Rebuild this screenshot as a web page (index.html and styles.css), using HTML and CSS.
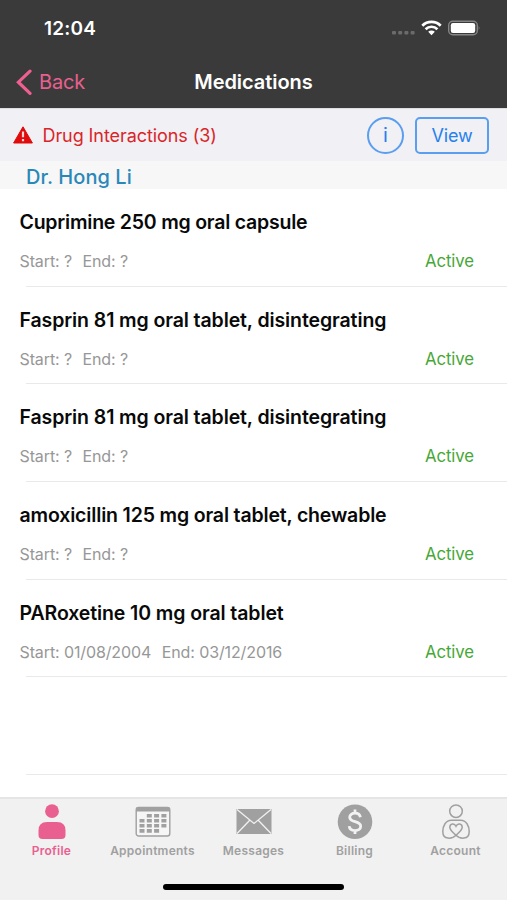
FILE: index.html
```html
<!DOCTYPE html>
<html lang="en">
<head>
<meta charset="utf-8">
<title>Medications</title>
<link rel="stylesheet" href="styles.css">
</head>
<body>
<div class="app">
  <header class="header">
    <div class="status">
      <span class="time">12:04</span>
      <svg class="status-icons" width="90" height="20" viewBox="0 0 90 20">
        <g fill="#6b6b6b"><rect x="1" y="12" width="4" height="3.6" rx="1"/><rect x="7.200" y="12" width="4" height="3.6" rx="1"/><rect x="13.400" y="12" width="4" height="3.6" rx="1"/><rect x="19.600" y="12" width="4" height="3.6" rx="1"/></g>
        <g transform="translate(-1 0)"><g fill="none" stroke="#fff" stroke-width="2.7"><path d="M32.3 6.700a13 13 0 0 1 18.400 0"/><path d="M35.600 10.200a8.300 8.300 0 0 1 11.800 0"/></g>
        <path d="M38.200 12.800a4.700 4.700 0 0 1 6.600 0L41.500 16.200z" fill="#fff"/></g>
        <rect x="57.700" y="2.200" width="28.600" height="13.600" rx="4" fill="none" stroke="#858585" stroke-width="1.400"/>
        <rect x="59.800" y="4" width="24.400" height="10" rx="2.200" fill="#fff"/>
        <path d="M87.700 6.700q1.600 2.300 0 4.600z" fill="#858585"/>
      </svg>
    </div>
    <nav class="navbar">
      <a class="back"><svg width="17" height="27" viewBox="0 0 17 27"><path d="M15 2.200 3.400 13.200 15 24.400" fill="none" stroke="#f05f92" stroke-width="3.200" stroke-linecap="round" stroke-linejoin="miter"/></svg><span>Back</span></a>
      <h1 class="heading">Medications</h1>
    </nav>
  </header>
  <section class="alert">
    <svg class="warning" width="20" height="18" viewBox="0 0 20 18"><path d="M10 .8 19.400 17H.6z" fill="#e10b0b" stroke="#e10b0b" stroke-linejoin="round"/><path d="M10 5.500v5.800M10 13v2.200" stroke="#f4d6da" stroke-width="2.200"/></svg>
    <span class="alert-text">Drug Interactions (3)</span>
    <button class="info">i</button>
    <button class="view">View</button>
  </section>
  <h2 class="doctor"><span>Dr. Hong Li</span></h2>
  <main class="list">
    <article class="med"><h3><span class="capsule">Cuprimine 250 mg oral capsule</span></h3><div class="details"><span class="start">Start: ?</span><span>End: ?</span><span class="active">Active</span></div></article>
    <article class="med"><h3><span>Fasprin 81 mg oral tablet, disintegrating</span></h3><div class="details"><span class="start">Start: ?</span><span>End: ?</span><span class="active">Active</span></div></article>
    <article class="med"><h3><span>Fasprin 81 mg oral tablet, disintegrating</span></h3><div class="details"><span class="start">Start: ?</span><span>End: ?</span><span class="active">Active</span></div></article>
    <article class="med"><h3><span class="chewable">amoxicillin 125 mg oral tablet, chewable</span></h3><div class="details"><span class="start">Start: ?</span><span>End: ?</span><span class="active">Active</span></div></article>
    <article class="med"><h3><span>PARoxetine 10 mg oral tablet</span></h3><div class="details"><span class="start">Start: 01/08/2004</span><span>End: 03/12/2016</span><span class="active">Active</span></div></article>
    <article class="med"></article>
  </main>
  <footer class="footer">
    <nav class="tabs">
      <a class="tab selected"><svg width="36" height="36" viewBox="0 0 36 36" fill="currentColor"><circle cx="18" cy="7.200" r="6.900"/><path d="M13 18h10q8.500 0 8.500 8.500V31q0 4-4 4H8.500q-4 0-4-4v-4.500Q4.500 18 13 18z"/></svg><span>Profile</span></a>
      <a class="tab"><svg width="36" height="36" viewBox="0 0 36 36"><rect x="1.200" y="3.500" width="33.600" height="28.500" rx="2.500" fill="#f6f6f6" stroke="currentColor" stroke-width="1.400"/><path d="M1 7.500V5q0-2 2-2h30q2 0 2 2v2.500z" fill="currentColor"/><g stroke="currentColor" stroke-width="3.600" stroke-dasharray="5 2.300"><path d="M11.800 11.700h20M4.500 16.700h27.300M4.500 21.700h27.300M4.500 26.900h20"/></g></svg><span>Appointments</span></a>
      <a class="tab"><svg width="36" height="36" viewBox="0 0 36 36"><path d="M.5 5h35v25H.5z" fill="currentColor"/><path d="M1 5.500 18 19.500 35 5.500M1 29.500l12.500-13M35 29.500l-12.500-13" fill="none" stroke="#f2f2f2" stroke-width="1.300"/></svg><span>Messages</span></a>
      <a class="tab"><svg width="36" height="36" viewBox="0 0 36 36"><circle cx="18" cy="17.800" r="17.300" fill="currentColor"/><path d="M23.400 13.300C22.900 10.400 20.500 9.200 18 9.200c-3 0-5.300 1.500-5.300 4.100 0 5.800 11 3 11 9 0 2.700-2.400 4.300-5.700 4.300s-5.500-1.400-5.800-4.400M18 5.600v3.600M18 26.600v3.500" fill="none" stroke="#f2f2f2" stroke-width="2.800"/></svg><span>Billing</span></a>
      <a class="tab"><svg width="36" height="36" viewBox="0 0 36 36" fill="none" stroke="currentColor" stroke-width="1.500"><circle cx="18" cy="7.200" r="6.300"/><path d="M18 31.300C15.500 34 12.500 34.300 10 34.100 6.500 33.800 4.800 31 4.800 27.500c0-5.500 3-11.300 8.500-11.300h9.400c5.500 0 8.500 5.800 8.500 11.300 0 3.500-1.700 6.300-5.200 6.600-2.500.2-5.500-.1-8-2.800z"/><path d="M18 31.300c-3.500-3-6.200-5.300-6.200-8 0-3.900 4.700-4.300 6.200-1.100 1.500-3.200 6.200-2.800 6.200 1.100 0 2.700-2.700 5-6.200 8z"/></svg><span>Account</span></a>
    </nav>
    <div class="home"></div>
  </footer>
</div>
</body>
</html>
```
FILE: styles.css
```css
* { box-sizing: border-box; }
body { margin: 0; font-family: Inter, "Liberation Sans", sans-serif; background: #fff; }
h1, h2, h3 { margin: 0; }
svg { display: block; flex: none; }
button { font: inherit; padding: 0; background: transparent; color: #2680ed; }
.app { width: 507px; height: 900px; display: flex; flex-direction: column; overflow: hidden; }
.header { height: 108px; background: #3a3a3a; color: #fff; flex: none; }
.status { height: 56px; padding: 0 26px 0 44px; display: flex; align-items: center; justify-content: space-between; }
.time { font-size: 19px; font-weight: 600; letter-spacing: .2px; padding-top: 1px; }
.status-icons { margin-top: 2px; }
.navbar { height: 52px; display: grid; grid-template-columns: 1fr auto 1fr; align-items: center; padding: 0 15px; }
.back { display: flex; align-items: center; gap: 7px; color: #e8608f; font-size: 20px; letter-spacing: -.2px; }
.heading { font-size: 20px; font-weight: 600; letter-spacing: -.05px; }
.alert { height: 53px; background: #f0f0f5; border-top: 1px solid #dedede; display: flex; align-items: center; padding: 0 18px 0 13px; flex: none; }
.alert-text { color: #da2528; font-size: 18px; letter-spacing: -.08px; margin-left: 9.500px; flex: 1; }
.info { width: 37px; height: 37px; border: 2px solid #5a9eef; border-radius: 50%; font-size: 20px; margin-right: 11px; }
.view { width: 74px; height: 37px; border: 2px solid #5a9eef; border-radius: 5px; font-size: 18px; letter-spacing: -.2px; }
.doctor { height: 28px; background: #f7f7f7; color: #2a88b9; font-size: 20px; font-weight: 500; line-height: 32px; letter-spacing: .05px; padding-left: 26px; flex: none; }
.list { flex: 1; }
.med { height: 97.700px; padding: 20px 33px 0 19.500px; background: linear-gradient(#e9e9e9, #e9e9e9) 26px 100% / 100% 1px no-repeat; }
.med h3 { font-size: 19.500px; line-height: 27px; font-weight: 600; letter-spacing: -.1px; white-space: nowrap; color: #090909; }
.med .capsule { letter-spacing: -.22px; }
.med .chewable { letter-spacing: -.16px; }
.details { margin-top: 13px; height: 24px; display: flex; align-items: center; color: #979797; font-size: 16px; letter-spacing: -.11px; white-space: nowrap; }
.start { margin-right: 10.500px; }
.active { margin-left: auto; color: #46a737; font-size: 16.800px; letter-spacing: -.1px; }
.footer { height: 103px; background: #f1f1f1; border-top: 2px solid #e5e5e5; flex: none; }
.tabs { display: grid; grid-template-columns: repeat(5, 101px); padding: 5px 1px 0; height: 82px; }
.tab { display: flex; flex-direction: column; align-items: center; color: #a0a0a0; font-size: 12px; font-weight: 600; letter-spacing: .25px; gap: 3px; }
.tab.selected { color: #e96090; }
.home { width: 181px; height: 6px; border-radius: 3px; background: #000; margin: 3px auto 0; }
```
